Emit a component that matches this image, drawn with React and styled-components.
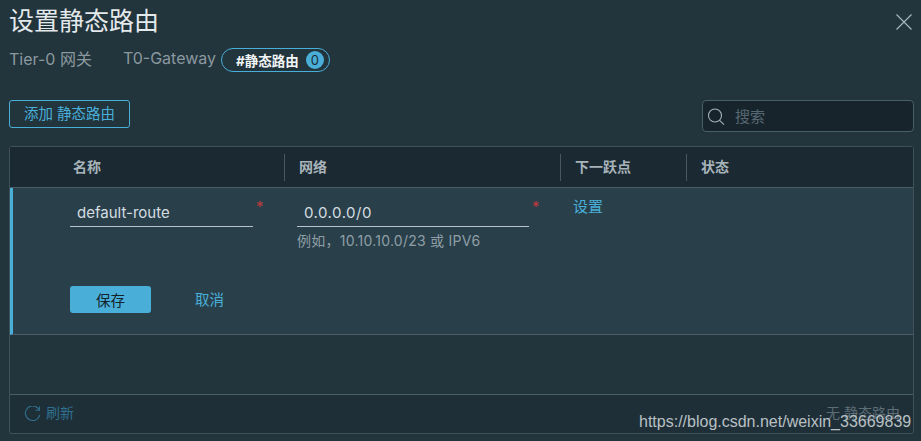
import React from 'react';
import styled, { createGlobalStyle } from 'styled-components';

const FONT = '"Inter", "Noto Sans CJK SC", sans-serif';
const Global = createGlobalStyle`
  html, body { margin: 0; padding: 0; width: 921px; height: 441px; overflow: hidden; background: #22343c; }
  * { box-sizing: border-box; }
  body { font-family: ${FONT}; }
`;
const Page = styled.div`
  position: relative; width: 921px; height: 441px; padding: 0 7px 0 9px;
  background: #22343c; display: flex; flex-direction: column; overflow: hidden;
`;
const TitleRow = styled.div`display: flex; justify-content: space-between; align-items: center; height: 43px;`;
const Title = styled.h1`margin: 0; font-size: 25px; font-weight: 400; line-height: 43px; color: #e4e9ec;`;
const Close = styled.button`
  width: 18px; height: 18px; padding: 0; border: 0; background: none; margin-right: 1px; color: #a9b7bd; display: flex;
`;
const Crumbs = styled.div`display: flex; align-items: center; height: 24px; margin-top: 3px; font-size: 16px; color: #8a999f;`;
const Crumb = styled.span`margin-right: ${p => p.$gap}px; white-space: nowrap;`;
const Pill = styled.div`
  display: flex; align-items: center; height: 24px; width: 109px; border: 1px solid #49afd9; border-radius: 12px;
  padding-left: 14px; font-size: 13.5px; font-weight: 700; color: #f2f5f6; white-space: nowrap; margin-top: 3px;
`;
const Badge = styled.span`
  width: 18px; height: 18px; margin-left: 7px; border-radius: 50%; background: #49afd9; color: #1b2a32;
  font-size: 13px; font-weight: 400; display: flex; align-items: center; justify-content: center;
`;
const Toolbar = styled.div`display: flex; justify-content: space-between; align-items: flex-start; margin-top: 30px; height: 46px;`;
const AddButton = styled.button`
  width: 121px; height: 28px; border: 1px solid #49afd9; border-radius: 3px; background: none; padding: 0 0 3px;
  color: #49afd9; font: 400 14.5px ${FONT}; white-space: nowrap;
`;
const Search = styled.div`
  width: 212px; height: 32px; border: 1px solid #485d68; border-radius: 4px; background: #17242c;
  display: flex; align-items: center; padding: 0 0 2px 4px; color: #566872; font-size: 15px; gap: 10px;
`;
const SearchIcon = styled.svg`width: 18px; height: 20px; flex: none; margin-top: 4px;`;
const Table = styled.div`
  width: 905px; height: 288px; border: 1px solid #3f525c; border-radius: 3px; display: flex; flex-direction: column;
`;
const Head = styled.div`
  height: 41px; background: #1b2a32; border-bottom: 1px solid #4a5e68; display: grid;
  grid-template-columns: 275px 276px 126px 1fr; align-items: center; font-size: 14px; font-weight: 700; color: #a8b4ba;
`;
const HeadCell = styled.div`
  height: 27px; display: flex; align-items: center; padding: 0 0 3px ${p => p.$pad}px;
  border-right: ${p => p.$last ? 0 : '1px solid #47595f'};
`;
const Row = styled.div`
  height: 147px; background: #29404b; border-left: 3px solid #49afd9; border-bottom: 1px solid #4a5e68;
  display: grid; grid-template-columns: 271px 276px 1fr; padding-top: 8px;
`;
const Cell = styled.div`padding-left: ${p => p.$pad}px; min-width: 0;`;
const FieldWrap = styled.div`display: flex; align-items: flex-start; width: ${p => p.$w}px;`;
const Input = styled.div`
  flex: none; width: ${p => p.$w}px; height: 31px; border-bottom: 1px solid #b6c2c8; padding: 8px 0 0 7px;
  font-size: 15px; line-height: 18px; color: #d5dde0; letter-spacing: ${p => p.$track || 0}px;
`;
const Required = styled.span`margin: 1px 0 0 3px; color: #c0393d; font-size: 15px; line-height: 20px; font-weight: 400;`;
const Hint = styled.div`margin-top: 5px; font-size: 14px; line-height: 17px; color: #8f9ea5; letter-spacing: 0.25px;`;
const SetLink = styled.a`display: block; margin-top: 2px; font-size: 15px; line-height: 18px; color: #49afd9;`;
const Actions = styled.div`display: flex; align-items: center; margin-top: 59px;`;
const Primary = styled.button`
  width: 81px; height: 27px; border: 0; border-radius: 3px; background: #49afd9; color: #14222a; font: 400 14.5px ${FONT}; padding: 0;
`;
const Cancel = styled.button`
  margin-left: 44px; border: 0; padding: 0 0 2px; background: none; color: #49afd9; font: 400 14.5px ${FONT};
`;
const Empty = styled.div`flex: 1; border-bottom: 1px solid #4a5e68;`;
const Foot = styled.div`
  height: 38px; background: #1f2f38; display: flex; justify-content: space-between; align-items: center; padding: 0 13px 5px 14px;
  font-size: 14px; border-radius: 0 0 3px 3px;
`;
const Refresh = styled.div`display: flex; align-items: center; gap: 5px; color: #2f708f;`;
const RefreshIcon = styled.svg`width: 17px; height: 17px; margin-top: 5px;`;
const NoData = styled.div`color: #5d6d75;`;
const Watermark = styled.div`
  position: absolute; left: 639px; top: 412px; font: 400 16px/20px "Liberation Sans", sans-serif; color: #b9c0c4; white-space: nowrap;
`;

export default function App() {
  return (
    <Page>
      <Global />
      <TitleRow>
        <Title>设置静态路由</Title>
        <Close aria-label="关闭">
          <svg width="18" height="18" viewBox="0 0 18 18" fill="none" stroke="currentColor" strokeWidth="1.2">
            <path d="M1.5 1.5 16.5 16.5M16.5 1.5 1.5 16.5" />
          </svg>
        </Close>
      </TitleRow>
      <Crumbs>
        <Crumb $gap={31}>Tier-0 网关</Crumb>
        <Crumb $gap={5}>T0-Gateway</Crumb>
        <Pill>#静态路由<Badge>0</Badge></Pill>
      </Crumbs>
      <Toolbar>
        <AddButton>添加 静态路由</AddButton>
        <Search>
          <SearchIcon viewBox="0 0 18 20" fill="none" stroke="#a4b2b8" strokeWidth="1.1">
            <circle cx="8" cy="8.5" r="6.5" />
            <path d="M12.6 13.4 17 17.6" />
          </SearchIcon>
          搜索
        </Search>
      </Toolbar>
      <Table>
        <Head>
          <HeadCell $pad={63}>名称</HeadCell>
          <HeadCell $pad={14}>网络</HeadCell>
          <HeadCell $pad={14}>下一跃点</HeadCell>
          <HeadCell $pad={14} $last>状态</HeadCell>
        </Head>
        <Row>
          <Cell $pad={57}>
            <FieldWrap $w={200}>
              <Input $w={183}>default-route</Input>
              <Required>*</Required>
            </FieldWrap>
            <Actions>
              <Primary>保存</Primary>
              <Cancel>取消</Cancel>
            </Actions>
          </Cell>
          <Cell $pad={13}>
            <FieldWrap $w={250}>
              <Input $w={232} $track={0.5}>0.0.0.0/0</Input>
              <Required>*</Required>
            </FieldWrap>
            <Hint>例如，10.10.10.0/23 或 IPV6</Hint>
          </Cell>
          <Cell $pad={13}>
            <SetLink>设置</SetLink>
          </Cell>
        </Row>
        <Empty />
        <Foot>
          <Refresh>
            <RefreshIcon viewBox="0 0 17 17" fill="none" stroke="currentColor" strokeWidth="1.1">
              <path d="M15 3.5A7.3 7.3 0 1 0 15.8 9" />
              <path d="M15.5 0.5V4.3H11.5" />
            </RefreshIcon>
            刷新
          </Refresh>
          <NoData>无 静态路由</NoData>
        </Foot>
      </Table>
      <Watermark>https://blog.csdn.net/weixin_33669839</Watermark>
    </Page>
  );
}
